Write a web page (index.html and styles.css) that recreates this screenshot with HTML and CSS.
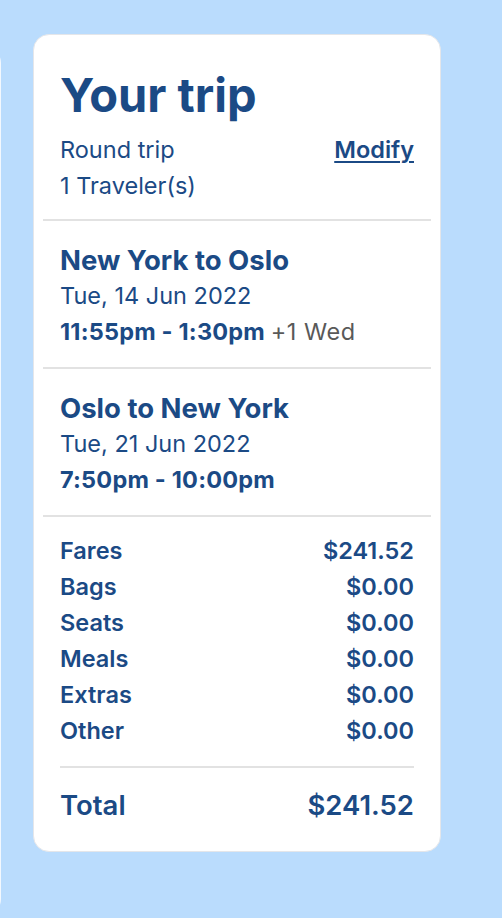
FILE: index.html
```html
<!DOCTYPE html>
<html lang="en">
<head>
<meta charset="utf-8">
<title>Your trip</title>
<link rel="stylesheet" href="styles.css">
</head>
<body>
<div class="page">
  <div class="side-panel"></div>
  <aside class="trip-card">
    <header class="trip-head">
      <h1 class="trip-title">Your trip</h1>
      <div class="meta-row">
        <span>Round trip</span>
        <a class="modify" href="#">Modify</a>
      </div>
      <div class="meta-row">1 Traveler(s)</div>
    </header>
    <hr class="divider">
    <section class="segment">
      <h2 class="route">New York to Oslo</h2>
      <div class="date">Tue, 14 Jun 2022</div>
      <div class="times">11:55pm - 1:30pm <span class="next-day">+1 Wed</span></div>
    </section>
    <hr class="divider">
    <section class="segment">
      <h2 class="route">Oslo to New York</h2>
      <div class="date">Tue, 21 Jun 2022</div>
      <div class="times">7:50pm - 10:00pm</div>
    </section>
    <hr class="divider">
    <section class="prices">
      <div class="price-row"><span>Fares</span><span>$241.52</span></div>
      <div class="price-row"><span>Bags</span><span>$0.00</span></div>
      <div class="price-row"><span>Seats</span><span>$0.00</span></div>
      <div class="price-row"><span>Meals</span><span>$0.00</span></div>
      <div class="price-row"><span>Extras</span><span>$0.00</span></div>
      <div class="price-row"><span>Other</span><span>$0.00</span></div>
      <hr class="divider inner">
      <div class="total-row"><span>Total</span><span>$241.52</span></div>
    </section>
  </aside>
</div>
</body>
</html>
```

FILE: styles.css
```css
* { box-sizing: border-box; }

html, body {
  margin: 0;
  padding: 0;
}

body {
  background: #badcfd;
  font-family: Inter, "Noto Sans", sans-serif;
  color: #1b4a85;
  width: 502px;
  height: 918px;
  overflow: hidden;
}

.page {
  display: flex;
  align-items: flex-start;
}

.side-panel {
  width: 100px;
  height: 868px;
  margin-left: -99px;
  margin-top: 47px;
  background: #f3f8fe;
  border-radius: 16px;
  flex-shrink: 0;
}

.trip-card {
  margin-left: 32px;
  margin-top: 34px;
  width: 408px;
  height: 818px;
  background: #ffffff;
  border: 1px solid #e4e6ea;
  border-radius: 16px;
  display: flex;
  flex-direction: column;
}

.trip-head {
  padding: 34px 26px 15px;
}

.trip-title {
  margin: 0 0 11px;
  font-size: 47px;
  line-height: 52px;
  font-weight: 700;
}

.meta-row {
  display: flex;
  justify-content: space-between;
  font-size: 23.5px;
  line-height: 36px;
  font-weight: 400;
}

.modify {
  color: #1b4a85;
  font-weight: 600;
  text-decoration: underline;
  text-underline-offset: 3px;
  text-decoration-thickness: 2px;
}

.divider {
  margin: 0 9px;
  border: 0;
  height: 2px;
  background: #e2e2e2;
}

.divider.inner {
  margin: 17px 0 17px;
}

.segment {
  padding: 21px 26px 17px;
}

.route {
  margin: 0;
  font-size: 27.5px;
  line-height: 36px;
  font-weight: 650;
}

.date {
  font-size: 23.5px;
  line-height: 36px;
  font-weight: 400;
}

.times {
  font-size: 23.5px;
  line-height: 36px;
  font-weight: 700;
  letter-spacing: 0.2px;
}

.next-day {
  color: #595959;
  font-weight: 400;
  letter-spacing: 0.5px;
}

.prices {
  padding: 16px 26px 0;
}

.price-row, .total-row {
  display: flex;
  justify-content: space-between;
  font-weight: 600;
}

.price-row {
  font-size: 23.5px;
  line-height: 36px;
}

.total-row {
  font-size: 27.5px;
  line-height: 40px;
}
```
